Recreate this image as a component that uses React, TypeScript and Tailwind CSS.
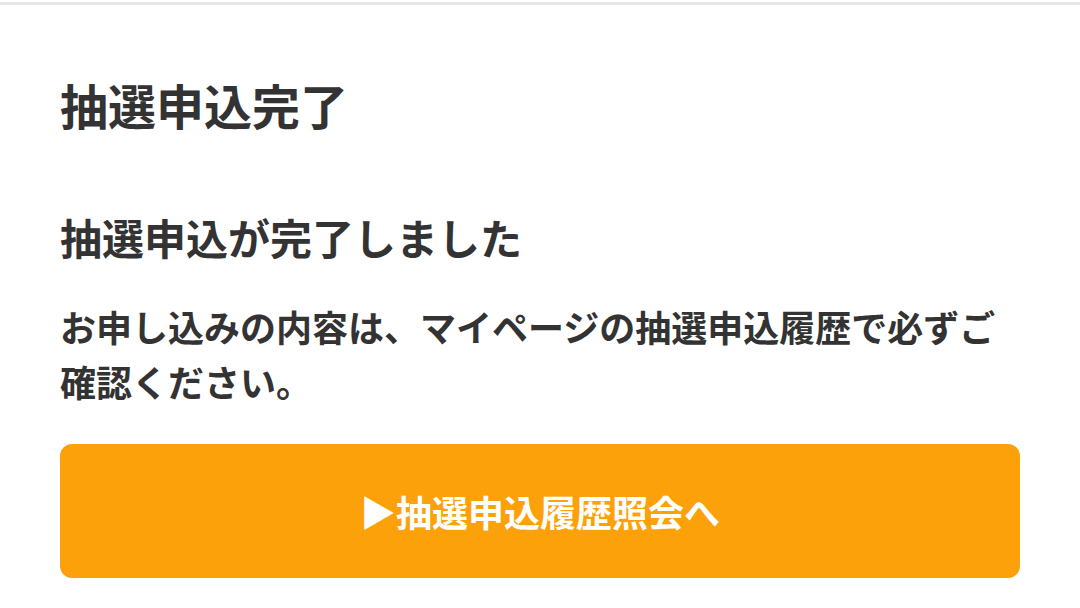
export default function App() {
  return (
    <div
      className="min-h-screen bg-white text-[#333333]"
      style={{ fontFamily: '"Noto Sans CJK JP", "Noto Sans", sans-serif' }}
    >
      <div className="pt-[2px]">
        <div className="h-[3px] bg-[#e6e6e6]" />
      </div>

      <div className="px-[60px]">
        <h1 className="mt-[70px] text-[48px] font-bold leading-[58px]">抽選申込完了</h1>

        <h2 className="mt-[78px] text-[42px] font-bold leading-[52px]">抽選申込が完了しました</h2>

        <p className="mt-[36px] text-[36px] font-bold leading-[55px]">
          お申し込みの内容は、マイページの抽選申込履歴で必ずご確認ください。
        </p>

        <button className="mt-[35px] flex h-[134px] w-full items-center justify-center rounded-[12px] bg-[#fca10a] text-[36px] font-bold text-white">
          ▶抽選申込履歴照会へ
        </button>
      </div>
    </div>
  )
}
